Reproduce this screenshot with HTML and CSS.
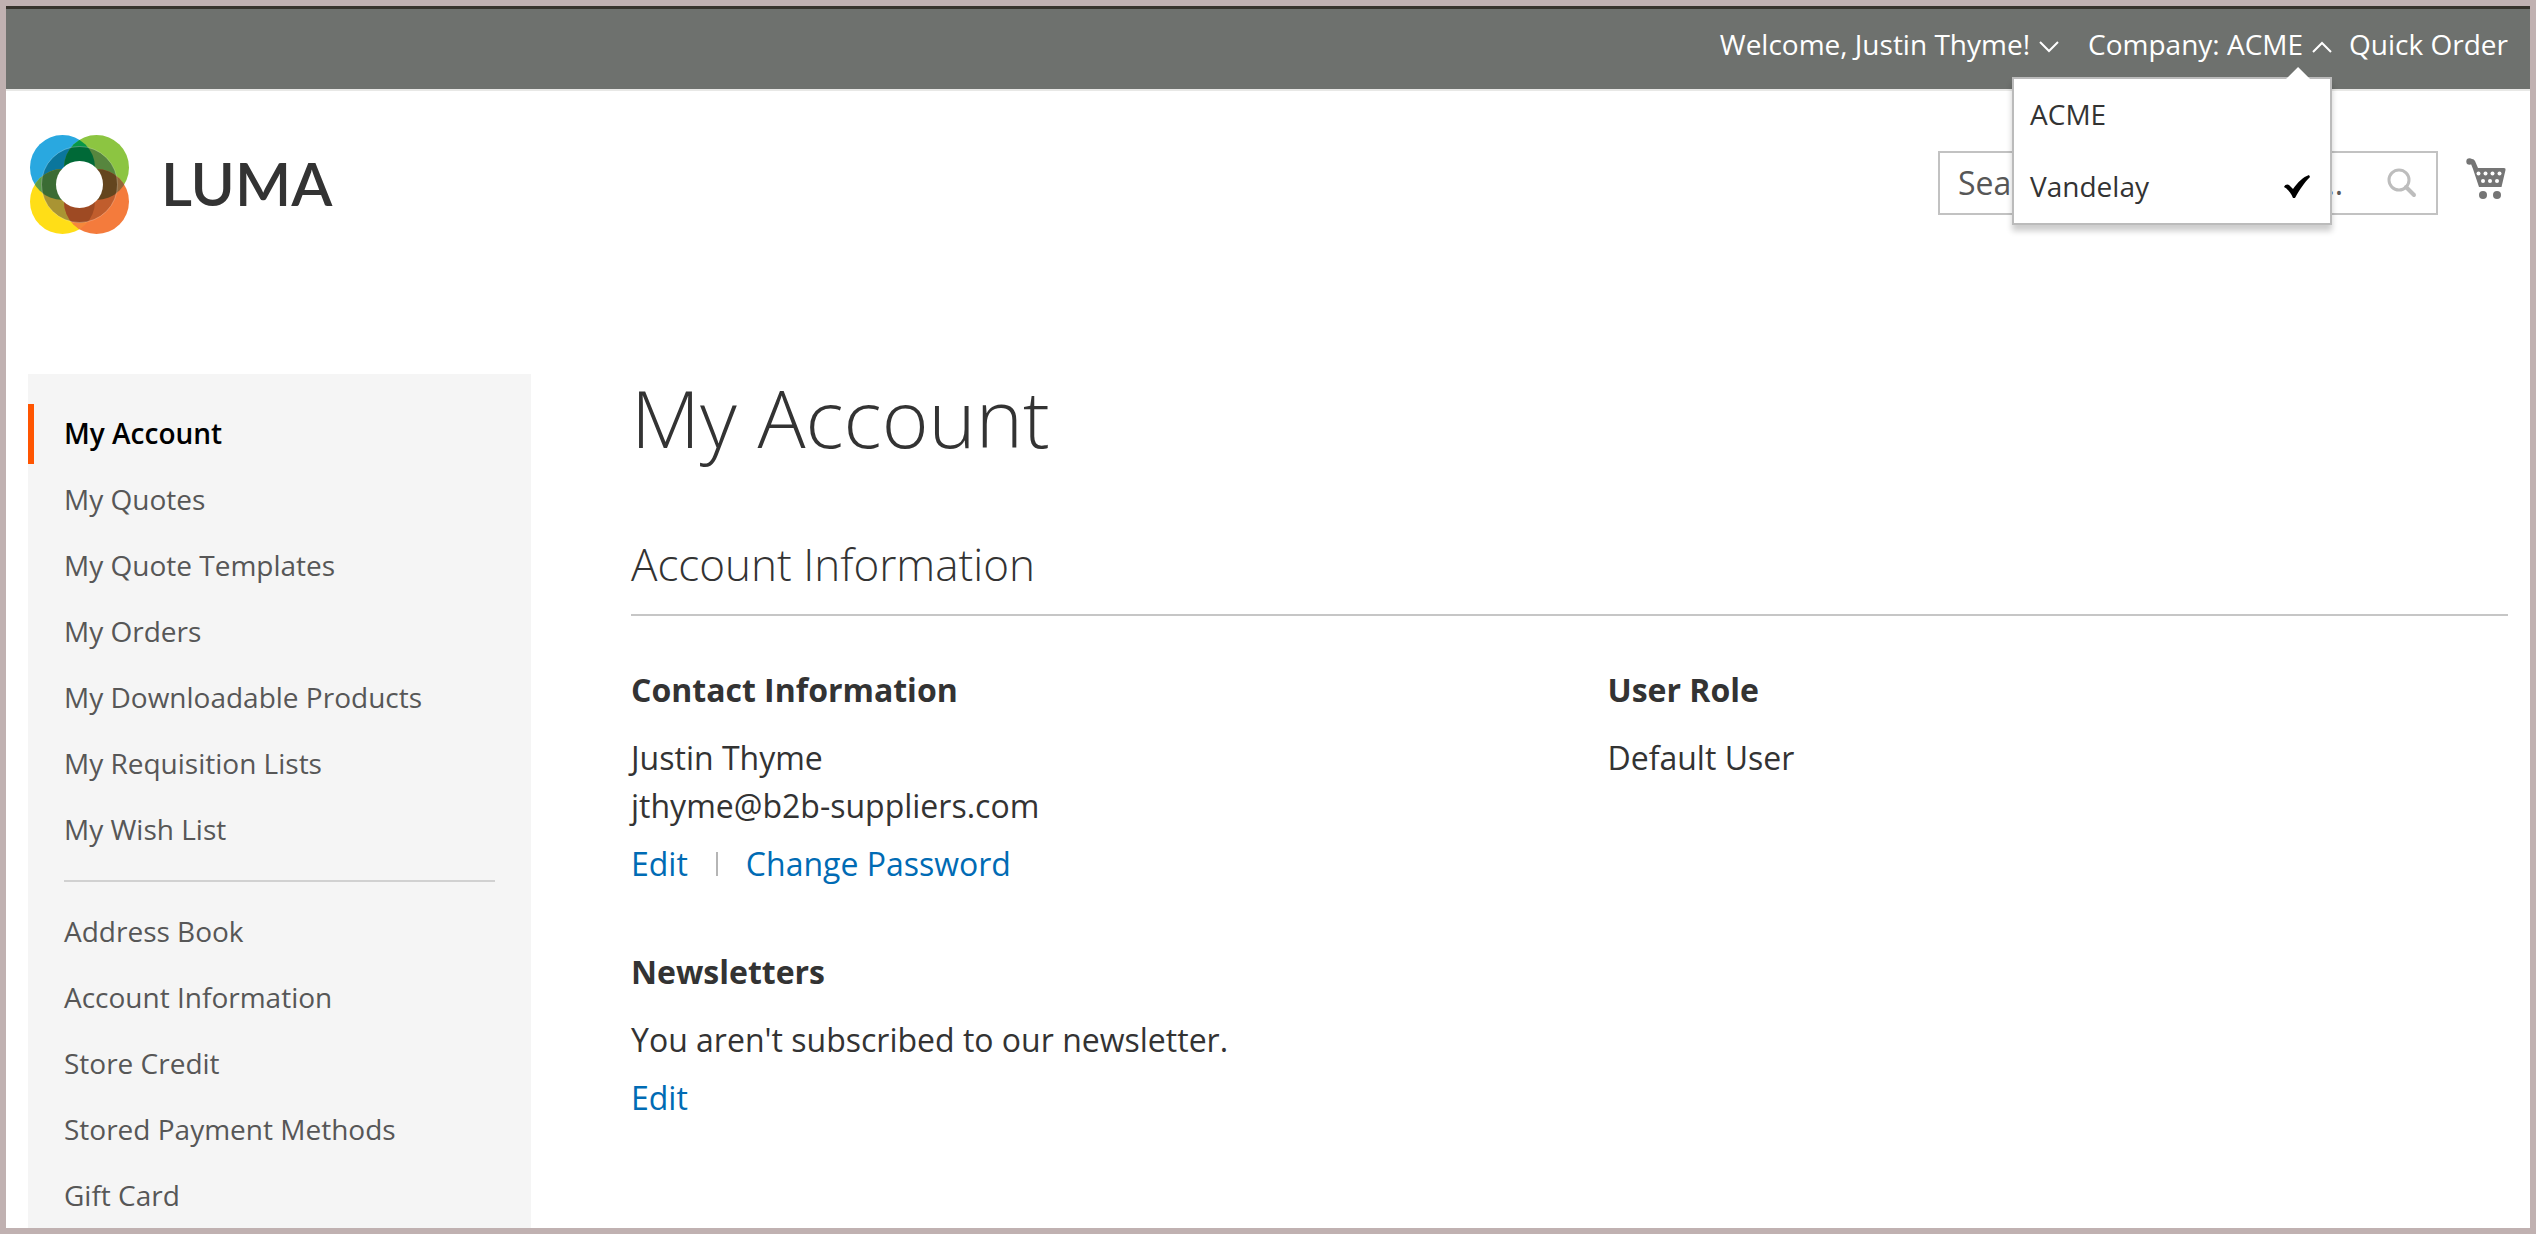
FILE: index.html
```html
<!DOCTYPE html>
<html lang="en">
<head>
<meta charset="utf-8">
<title>My Account</title>
<link rel="stylesheet" href="styles.css">
</head>
<body>
<header>
  <nav class="panel" aria-label="Customer">
    <button class="panel-item welcome" type="button">Welcome, Justin Thyme!
      <svg class="chevron" viewBox="0 0 20 12"><path d="M1 1l9 9 9-9"/></svg>
    </button>
    <div class="switcher">
      <button class="panel-item" type="button" aria-expanded="true">Company: ACME
        <svg class="chevron" viewBox="0 0 20 12"><path d="M1 11l9-9 9 9"/></svg>
      </button>
      <ul class="menu">
        <li><a href="#">ACME</a></li>
        <li><a href="#">Vandelay
          <svg class="check" viewBox="0 0 26 23"><path d="M0 12C1 9 4 9 5 10L9 14C14 7 19 2 25 0L26 2C20 8 16 14 11 23H9C7 18 4 14 0 12z"/></svg>
        </a></li>
      </ul>
    </div>
    <a class="panel-item" href="#">Quick Order</a>
  </nav>
  <div class="header-content">
    <a class="logo" href="#">
      <svg class="logo-mark" viewBox="0 0 99 99">
        <defs>
          <clipPath id="blue"><circle cx="32.500" cy="32.500" r="32.500"/></clipPath>
          <clipPath id="green"><circle cx="66.500" cy="32.500" r="32.500"/></clipPath>
          <clipPath id="yellow"><circle cx="32.500" cy="66.500" r="32.500"/></clipPath>
          <clipPath id="orange"><circle cx="66.500" cy="66.500" r="32.500"/></clipPath>
        </defs>
        <circle cx="32.500" cy="32.500" r="32.500" fill="#29a8e0"/>
        <circle cx="66.500" cy="32.500" r="32.500" fill="#8cc541"/>
        <circle cx="32.500" cy="66.500" r="32.500" fill="#ffde17"/>
        <circle cx="66.500" cy="66.500" r="32.500" fill="#f47b3c"/>
        <g clip-path="url(#blue)"><circle cx="66.500" cy="32.500" r="32.500" fill="#079648"/><circle cx="32.500" cy="66.500" r="32.500" fill="#5c9b4a"/></g>
        <g clip-path="url(#orange)"><circle cx="66.500" cy="32.500" r="32.500" fill="#92673a"/><circle cx="32.500" cy="66.500" r="32.500" fill="#f5873a"/></g>
        <circle cx="49.500" cy="49.500" r="38" fill="#0b769c" clip-path="url(#blue)"/>
        <circle cx="49.500" cy="49.500" r="38" fill="#57863e" clip-path="url(#green)"/>
        <circle cx="49.500" cy="49.500" r="38" fill="#a99433" clip-path="url(#yellow)"/>
        <circle cx="49.500" cy="49.500" r="38" fill="#c05d2d" clip-path="url(#orange)"/>
        <g clip-path="url(#blue)"><g clip-path="url(#green)"><circle cx="49.500" cy="49.500" r="38" fill="#006937"/></g><g clip-path="url(#yellow)"><circle cx="49.500" cy="49.500" r="38" fill="#3b6c34"/></g></g>
        <g clip-path="url(#orange)"><g clip-path="url(#green)"><circle cx="49.500" cy="49.500" r="38" fill="#64451e"/></g><g clip-path="url(#yellow)"><circle cx="49.500" cy="49.500" r="38" fill="#9e4a23"/></g></g>
        <circle cx="49.500" cy="49.500" r="38" fill="none" stroke="#fff" stroke-opacity=".35" stroke-width=".7"/>
        <circle cx="49.500" cy="49.500" r="23.500" fill="#fff"/>
      </svg>
      <span class="logo-name">LUMA</span>
    </a>
    <form class="search" role="search">
      <input type="text" aria-label="Search" placeholder="Search entire store here...">
      <button type="button" aria-label="Search">
        <svg viewBox="0 0 30 30"><circle cx="12" cy="12" r="10" fill="none" stroke="#bdbdbd" stroke-width="3"/><path d="M19 19l8 8" stroke="#bdbdbd" stroke-width="4" stroke-linecap="round"/></svg>
      </button>
    </form>
    <a class="cart" href="#" aria-label="My Cart">
      <svg viewBox="0 0 40 42"><circle cx="3.500" cy="3.500" r="3.200"/><path d="M3 1h3q2 0 3 2l3 7h26q2 0 1.500 2l-4 17H13L7 11 5 6 2 5z"/><circle cx="17" cy="37" r="4"/><circle cx="31" cy="37" r="4"/>
      <g fill="#fff"><circle cx="12.500" cy="15.500" r="2"/><circle cx="19.500" cy="15.500" r="2"/><circle cx="26.500" cy="15.500" r="2"/><circle cx="33.500" cy="15.500" r="2"/><circle cx="17" cy="23" r="2"/><circle cx="24" cy="23" r="2"/><circle cx="31" cy="23" r="2"/></g></svg>
    </a>
  </div>
</header>
<div class="columns">
  <aside class="sidebar">
    <ul>
      <li class="current"><a href="#" aria-current="page">My Account</a></li>
      <li><a href="#">My Quotes</a></li>
      <li><a href="#">My Quote Templates</a></li>
      <li><a href="#">My Orders</a></li>
      <li><a href="#">My Downloadable Products</a></li>
      <li><a href="#">My Requisition Lists</a></li>
      <li><a href="#">My Wish List</a></li>
      <li class="delimiter" role="separator"></li>
      <li><a href="#">Address Book</a></li>
      <li><a href="#">Account Information</a></li>
      <li><a href="#">Store Credit</a></li>
      <li><a href="#">Stored Payment Methods</a></li>
      <li><a href="#">Gift Card</a></li>
    </ul>
  </aside>
  <main>
    <h1>My Account</h1>
    <h2>Account Information</h2>
    <div class="blocks">
      <section>
        <h3>Contact Information</h3>
        <p>Justin Thyme<br>jthyme@b2b-suppliers.com</p>
        <div class="actions"><a href="#">Edit</a><a href="#">Change Password</a></div>
      </section>
      <section>
        <h3>User Role</h3>
        <p>Default User</p>
      </section>
      <section>
        <h3>Newsletters</h3>
        <p>You aren't subscribed to our newsletter.</p>
        <div class="actions"><a href="#">Edit</a></div>
      </section>
    </div>
  </main>
</div>
</body>
</html>
```
FILE: styles.css
```css
* {
  box-sizing: border-box;
}

body {
  display: flex;
  flex-direction: column;
  height: 100vh;
  margin: 0;
  overflow: hidden;
  border: 6px solid #c0b1b1;
  background: #fff;
  color: #333;
  font: 28px/40px "Open Sans", sans-serif;
}

a {
  color: #006bb4;
  text-decoration: none;
}

button {
  padding: 0;
  border: 0;
  background: none;
  color: inherit;
  font: inherit;
}

ul {
  margin: 0;
  padding: 0;
  list-style: none;
}

svg {
  display: block;
}

/* Top panel */
.panel {
  display: flex;
  justify-content: flex-end;
  height: 85px;
  padding: 15px 22px 0;
  border-top: 3px solid #36332c;
  border-bottom: 2px solid #e8e8e6;
  background: #6e716e;
  color: #fff;
}

.panel-item {
  display: flex;
  align-items: center;
  gap: 9px;
  height: 40px;
  color: #fff;
}

.welcome {
  margin-right: 29px;
}

.switcher {
  position: relative;
  margin-right: 17px;
}

.chevron {
  width: 20px;
  height: 12px;
  margin-top: 6px;
  fill: none;
  stroke: #fff;
  stroke-width: 2;
}

.menu {
  position: absolute;
  top: 53px;
  right: 0;
  z-index: 2;
  width: 320px;
  height: 148px;
  border: 2px solid #bbb;
  background: #fff;
  box-shadow: 0 6px 6px rgba(0, 0, 0, 0.2);
}

.menu::before {
  position: absolute;
  top: -12px;
  right: 20px;
  width: 24px;
  height: 12px;
  background: #fff;
  clip-path: polygon(50% 0, 100% 100%, 0 100%);
  content: "";
}

.menu a {
  display: flex;
  align-items: center;
  justify-content: space-between;
  height: 72px;
  padding: 0 20px 2px 16px;
  color: #333;
}

.check {
  width: 26px;
  height: 23px;
  fill: #000;
}

/* Logo, search and cart */
.header-content {
  display: flex;
  align-items: flex-start;
  padding: 44px 22px 0;
}

.logo {
  display: flex;
  align-items: center;
  gap: 32px;
  margin-right: auto;
  padding-left: 2px;
  color: #333;
}

.logo-mark {
  width: 99px;
  height: 99px;
}

.logo-name {
  font: 600 60px/96px Lato, sans-serif;
  padding-bottom: 3px;
}

.search {
  display: flex;
  align-items: center;
  width: 500px;
  height: 64px;
  margin: 16px 28px 0 0;
  border: 2px solid #c2c2c2;
}

.search input {
  flex: 1;
  min-width: 0;
  padding: 0 18px;
  border: 0;
  background: none;
  font: 32px/44px "Open Sans", sans-serif;
}

.search input::placeholder {
  color: #575757;
  opacity: 1;
}

.search button {
  width: 30px;
  margin-right: 19px;
}

.cart {
  width: 40px;
  margin: 23px 2px 0 0;
  fill: #757575;
}

/* Account columns */
.columns {
  display: flex;
  flex: 1;
  gap: 100px;
  padding: 140px 22px 0;
}

.sidebar {
  flex: none;
  width: 503px;
  padding: 30px 0;
  background: #f5f5f5;
}

.sidebar li {
  margin-bottom: 6px;
  padding: 9px 36px 11px;
  border-left: 0 solid #ff5501;
}

.sidebar a {
  color: #575757;
}

.sidebar .current {
  padding-left: 30px;
  border-left-width: 6px;
}

.sidebar .current a {
  color: #000;
  font-weight: 600;
}

.sidebar .delimiter {
  height: 2px;
  margin: 20px 36px;
  padding: 0;
  background: #d1d1d1;
}

main {
  flex: 1;
}

h1 {
  margin: 0 0 74px;
  font-size: 80px;
  font-weight: 300;
  line-height: 86px;
}

h2 {
  margin: 0 0 50px;
  padding-bottom: 20px;
  border-bottom: 2px solid #c6c6c6;
  font-size: 44px;
  font-weight: 300;
  line-height: 60px;
}

.blocks {
  display: grid;
  grid-template-columns: 1fr 1fr;
  gap: 60px 76px;
  font-size: 32px;
  line-height: 48px;
}

h3 {
  margin: 0 0 20px;
  font-size: 32px;
  font-weight: 700;
  line-height: 48px;
}

p {
  margin: 0 0 10px;
}

.actions {
  display: flex;
}

.actions a + a {
  display: flex;
  align-items: center;
}

.actions a + a::before {
  width: 2px;
  height: 24px;
  margin: 0 28px;
  background: #b5b5b5;
  content: "";
}
```
